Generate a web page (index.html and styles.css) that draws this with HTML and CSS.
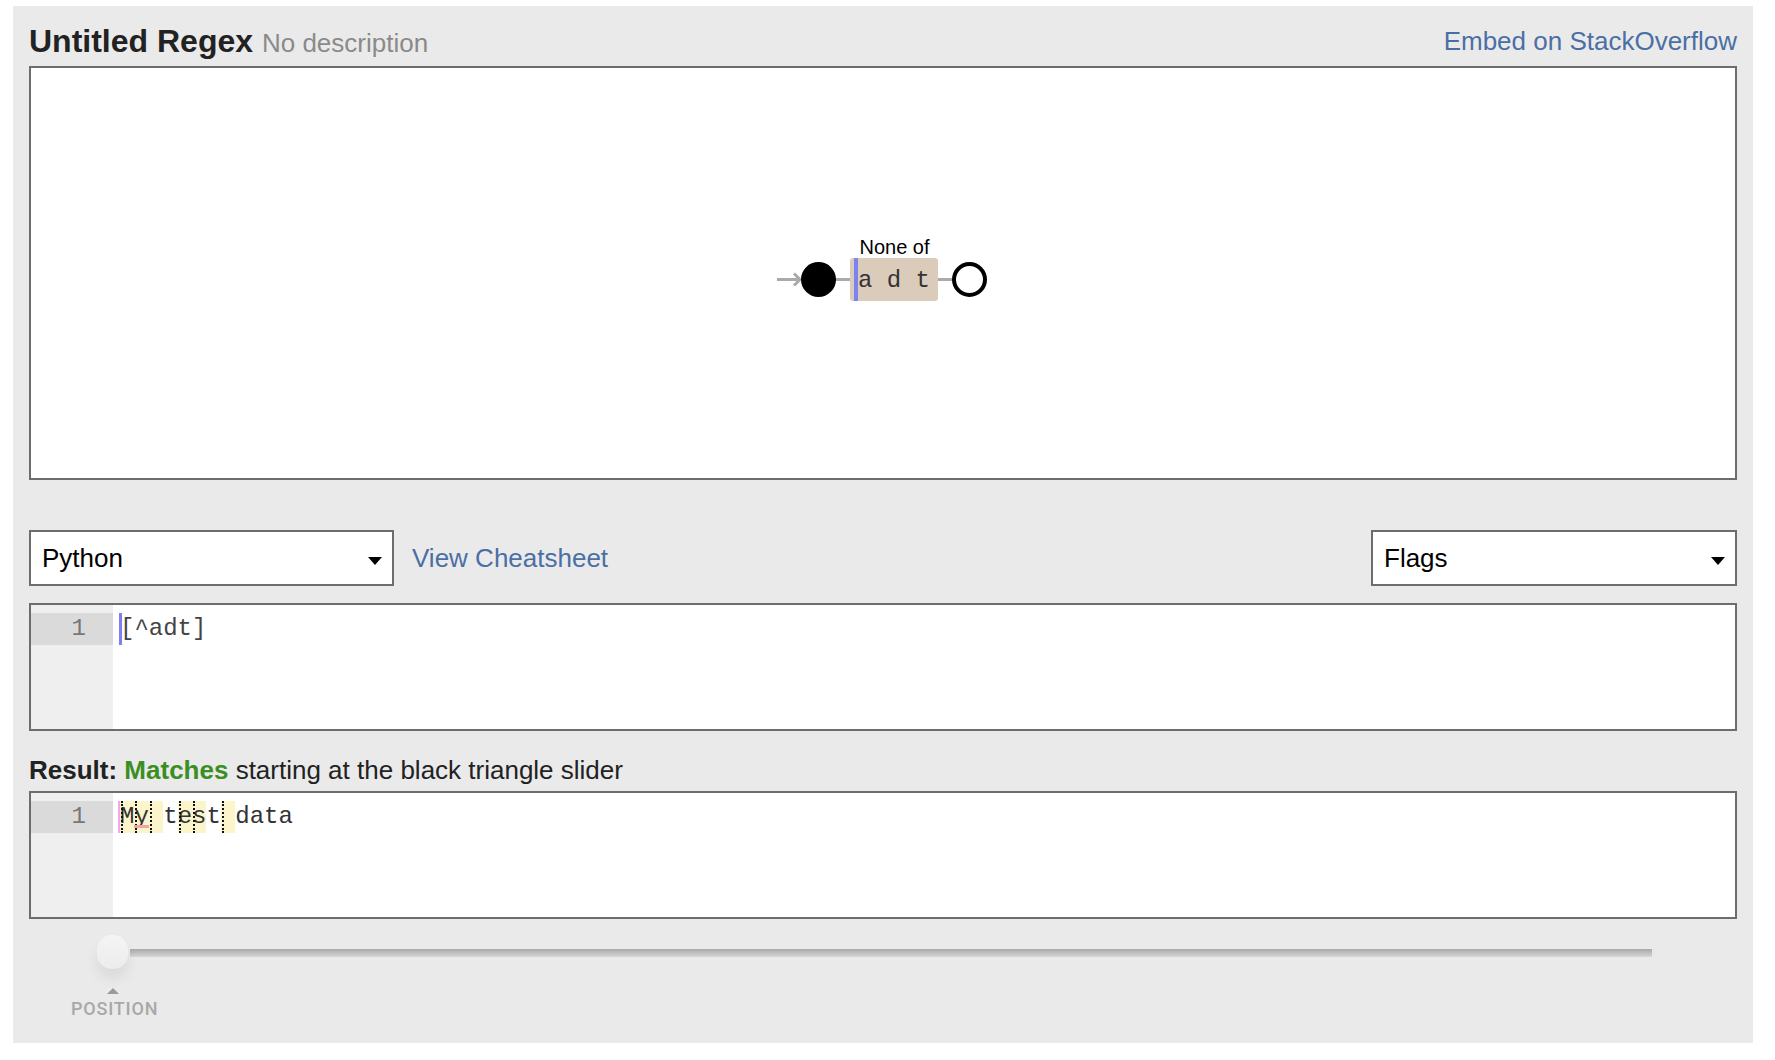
FILE: index.html
```html
<!DOCTYPE html>
<html>
<head>
<meta charset="utf-8">
<title>Untitled Regex</title>
<link rel="stylesheet" href="styles.css">
</head>
<body>
<div class="panel">
  <div class="header">
    <div class="title-group"><span class="title">Untitled Regex</span> <span class="desc">No description</span></div>
    <a class="link embed">Embed on StackOverflow</a>
  </div>

  <div class="canvas">
    <svg class="diagram" width="212" height="66" viewBox="0 0 212 66">
      <path d="M0 43.5H23" stroke="#aaa" stroke-width="3" fill="none"/>
      <path d="M17 37.5L23 43.5L17 49.5" stroke="#aaa" stroke-width="3" fill="none"/>
      <path d="M58 43.5H74" stroke="#aaa" stroke-width="3" fill="none"/>
      <path d="M160 43.5H176" stroke="#aaa" stroke-width="3" fill="none"/>
      <circle cx="41.5" cy="43.5" r="17.5" fill="#000"/>
      <text class="lbl" x="117.5" y="18" text-anchor="middle">None of</text>
      <rect x="73" y="22" width="88" height="43" rx="3" fill="#dacbbb"/>
      <rect x="77" y="22" width="4" height="43" fill="#7b83f0"/>
      <text class="chars" x="81" y="51">a d t</text>
      <circle cx="192.5" cy="43.5" r="15.5" fill="#fff" stroke="#000" stroke-width="4"/>
    </svg>
  </div>

  <div class="controls">
    <div class="select select-lang"><span>Python</span><span class="caret"></span></div>
    <a class="link cheat">View Cheatsheet</a>
    <div class="select select-flags"><span>Flags</span><span class="caret"></span></div>
  </div>

  <div class="editor editor-regex">
    <div class="gutter"><div class="ln active">1</div></div>
    <div class="code"><div class="line regex-line"><span class="cursor"></span>[^adt]</div></div>
  </div>

  <div class="result"><b>Result:</b> <b class="ok">Matches</b> starting at the black triangle slider</div>

  <div class="editor editor-test">
    <div class="gutter"><div class="ln active">1</div></div>
    <div class="code"><div class="line test-line"><span class="pos"></span><span class="m">M</span><span class="m u">y</span><span class="m"> </span>t<span class="m">e</span><span class="m">s</span>t<span class="m"> </span>data</div></div>
  </div>

  <div class="slider">
    <div class="track"></div>
    <div class="knob"></div>
    <div class="tri"></div>
    <div class="poslabel">POSITION</div>
  </div>
</div>
</body>
</html>
```

FILE: styles.css
```css
html, body {
  margin: 0;
  padding: 0;
  background: #fff;
}

body {
  font-family: "Liberation Sans", Arial, sans-serif;
  color: #222;
}

.panel {
  box-sizing: border-box;
  width: 1740px;
  height: 1037px;
  margin: 6px 0 0 13px;
  padding: 0 16px;
  background: #eaeaea;
}

.header {
  display: flex;
  justify-content: space-between;
  align-items: baseline;
  padding: 15px 0 5px;
  height: 40px;
}

.title-group {
  font-size: 32px;
  line-height: 40px;
  white-space: nowrap;
}

.title {
  font-weight: bold;
  color: #222;
}

.desc {
  font-size: 26px;
  line-height: 26px;
  color: #8a8a8a;
}

.link {
  color: #4a6fa5;
  text-decoration: none;
  font-size: 26px;
}

.embed {
  line-height: 40px;
  position: relative;
  top: -2px;
}

.canvas {
  box-sizing: border-box;
  height: 414px;
  border: 2px solid #6d6d6d;
  background: #fff;
  display: flex;
  align-items: center;
  justify-content: center;
  padding-bottom: 8px;
}

.diagram {
  display: block;
  overflow: visible;
}

.diagram .lbl {
  font-family: "Liberation Sans", Arial, sans-serif;
  font-size: 20px;
  fill: #000;
}

.diagram .chars {
  font-family: "Liberation Mono", "Courier New", monospace;
  font-size: 24px;
  fill: #333;
}

.controls {
  display: flex;
  align-items: center;
  margin-top: 50px;
  height: 56px;
}

.select {
  box-sizing: border-box;
  height: 56px;
  border: 2px solid #6d6d6d;
  background: #fff;
  display: flex;
  align-items: center;
  justify-content: space-between;
  padding: 0 10px 0 11px;
  font-size: 26px;
  color: #000;
}

.select-lang {
  width: 365px;
}

.select-flags {
  width: 366px;
  margin-left: auto;
}

.caret {
  width: 0;
  height: 0;
  border-top: 8px solid #000;
  border-left: 7.5px solid transparent;
  border-right: 7.5px solid transparent;
  margin-top: 6px;
}

.cheat {
  margin-left: 18px;
}

.editor {
  box-sizing: border-box;
  display: flex;
  height: 128px;
  border: 2px solid #6d6d6d;
  background: #fff;
  font-family: "Liberation Mono", "Courier New", monospace;
  font-size: 24px;
  line-height: 32px;
}

.editor-regex {
  margin-top: 17px;
}

.gutter {
  width: 82px;
  flex: none;
  background: #efefef;
  padding-top: 8px;
}

.ln {
  height: 32px;
  text-align: right;
  padding-right: 27px;
  color: #777;
}

.ln.active {
  background: #dadada;
}

.code {
  flex: 1;
  padding: 8px 0 0 7px;
}

.line {
  height: 32px;
  white-space: pre;
}

.regex-line {
  color: #444;
}

.test-line {
  color: #333;
}

.cursor {
  display: inline-block;
  width: 3px;
  height: 32px;
  vertical-align: top;
  margin-left: -1px;
  margin-right: -2px;
  background: #7f7ff2;
}

.pos {
  display: inline-block;
  width: 2px;
  height: 32px;
  vertical-align: top;
  margin-left: -2px;
  background: #f2a6f0;
}

.m {
  display: inline-block;
  position: relative;
  height: 32px;
  vertical-align: top;
  background: #fcf5cc;
}

.m::before {
  content: "";
  position: absolute;
  left: 1px;
  top: 0;
  bottom: 0;
  border-left: 2px dotted #111;
}

.m.u::after {
  content: "";
  position: absolute;
  left: 0;
  right: 0;
  bottom: 5px;
  height: 3px;
  background: #f4a3a3;
}

.result {
  margin: 23px 0 5px;
  font-size: 26px;
  line-height: 32px;
  color: #222;
}

.result .ok {
  color: #3b8f22;
}

.slider {
  position: relative;
  box-sizing: border-box;
  height: 124px;
  padding-top: 30px;
}

.track {
  margin-left: 101px;
  width: 1522px;
  height: 8px;
  background: linear-gradient(#a9a9a9, #d6d6d6);
}

.knob {
  position: absolute;
  left: 68px;
  top: 16px;
  width: 31px;
  height: 34px;
  border-radius: 15px;
  background: linear-gradient(#f4f4f4, #ececec);
  box-shadow: 0 10px 14px rgba(0, 0, 0, 0.07);
}

.tri {
  position: absolute;
  left: 78px;
  top: 69px;
  width: 0;
  height: 0;
  border-bottom: 6px solid #9a9a9a;
  border-left: 6px solid transparent;
  border-right: 6px solid transparent;
}

.poslabel {
  position: absolute;
  left: 42px;
  top: 79px;
  font-family: Roboto, "Liberation Sans", sans-serif;
  font-weight: 500;
  font-size: 18px;
  letter-spacing: 0.8px;
  line-height: 22px;
  color: #a8a8a8;
}
```
